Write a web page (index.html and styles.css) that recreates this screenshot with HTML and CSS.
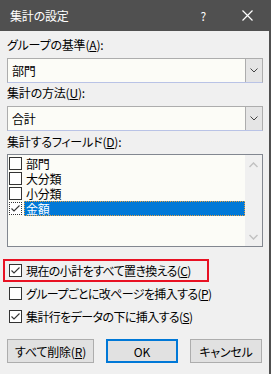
FILE: index.html
```html
<!DOCTYPE html>
<html lang="ja">
<head>
<meta charset="UTF-8" />
<title>集計の設定</title>
<link rel="stylesheet" href="styles.css">
</head>
<body>

<div class="dialog">
  <div class="titlebar">
    <span class="title">集計の設定</span>
    <span class="help">?</span>
    <svg class="close" width="11" height="11" viewBox="0 0 11 11"><path d="M0.5 0.5L10.5 10.5M10.5 0.5L0.5 10.5" stroke="#fff" stroke-width="1.2" fill="none"/></svg>
  </div>

  <div class="content">
    <div class="label label-first">グループの基準(<u>A</u>):</div>
    <div class="combo">
      <span class="combo-value">部門</span>
      <span class="combo-btn"><svg width="8" height="5" viewBox="0 0 8 5"><polyline points="0.5,0.5 4,4 7.5,0.5" stroke="#444" fill="none"/></svg></span>
    </div>

    <div class="label">集計の方法(<u>U</u>):</div>
    <div class="combo">
      <span class="combo-value">合計</span>
      <span class="combo-btn"><svg width="8" height="5" viewBox="0 0 8 5"><polyline points="0.5,0.5 4,4 7.5,0.5" stroke="#444" fill="none"/></svg></span>
    </div>

    <div class="label label-list">集計するフィールド(<u>D</u>):</div>
    <div class="listbox">
      <div class="items">
        <div class="item"><span class="box"></span><span class="item-text">部門</span></div>
        <div class="item"><span class="box"></span><span class="item-text">大分類</span></div>
        <div class="item"><span class="box"></span><span class="item-text">小分類</span></div>
        <div class="item selected"><span class="box checked dotted"><svg width="11" height="11" viewBox="0 0 11 11"><polyline points="1.5,5.5 4,8 9.5,2.5" stroke="#333" stroke-width="1.1" fill="none"/></svg></span><span class="item-text">金額</span></div>
      </div>
      <div class="scrollbar">
        <svg width="9" height="6" viewBox="0 0 9 6"><polyline points="0.5,5 4.5,1 8.5,5" stroke="#c2c2c2" stroke-width="1.5" fill="none"/></svg>
        <svg width="9" height="6" viewBox="0 0 9 6"><polyline points="0.5,1 4.5,5 8.5,1" stroke="#c2c2c2" stroke-width="1.5" fill="none"/></svg>
      </div>
    </div>

    <div class="options">
      <div class="option marked">
        <span class="box"><svg width="11" height="11" viewBox="0 0 11 11"><polyline points="1.5,5.5 4,8 9.5,2.5" stroke="#333" stroke-width="1.1" fill="none"/></svg></span>
        <span>現在の小計をすべて置き換える(<u>C</u>)</span>
      </div>
      <div class="option">
        <span class="box"></span>
        <span>グループごとに改ページを挿入する(<u>P</u>)</span>
      </div>
      <div class="option">
        <span class="box"><svg width="11" height="11" viewBox="0 0 11 11"><polyline points="1.5,5.5 4,8 9.5,2.5" stroke="#333" stroke-width="1.1" fill="none"/></svg></span>
        <span>集計行をデータの下に挿入する(<u>S</u>)</span>
      </div>
    </div>

    <div class="buttons">
      <button class="btn btn-wide">すべて削除(<u>R</u>)</button>
      <button class="btn btn-default">OK</button>
      <button class="btn">キャンセル</button>
    </div>
  </div>
</div>

</body>
</html>
```

FILE: styles.css
```css
body {
  margin: 0;
  background: #f0f0f0;
  font-family: "Noto Sans CJK JP", "Noto Sans", sans-serif;
  font-size: 12px;
  font-feature-settings: "palt";
  letter-spacing: -0.2px;
  color: #000;
}
u {
  text-underline-offset: 1px;
}
.dialog {
  width: 269px;
  height: 374px;
  background: #f0f0f0;
  border-right: 2px solid #505050;
}
.titlebar {
  height: 31px;
  background: #505050;
  color: #fff;
  display: flex;
  align-items: center;
  padding-left: 10px;
}
.title {
  flex: 1;
}
.help {
  margin-right: 36px;
}
.close {
  margin-right: 16px;
}
.content {
  padding: 6px 0 0 7px;
  width: 256px;
}
.label {
  height: 16px;
  line-height: 16px;
  margin-top: 2px;
}
.label-first {
  margin-top: 0;
}
.label-list {
  margin-top: 3px;
}
.combo {
  margin-top: 5px;
  height: 25px;
  box-sizing: border-box;
  border: 1px solid #adadad;
  border-bottom-color: #b9c3e6;
  background: #fcfcf7;
  display: flex;
}
.combo-value {
  flex: 1;
  line-height: 23px;
  padding-left: 4px;
}
.combo-btn {
  width: 16px;
  background: #e5e5e5;
  border-left: 1px solid #adadad;
  display: flex;
  align-items: center;
  justify-content: center;
}
.listbox {
  margin-top: 4px;
  height: 93px;
  box-sizing: border-box;
  border: 1px solid #828790;
  background: #fcfcf7;
  display: flex;
}
.items {
  flex: 1;
  padding: 1px 0 0 1px;
}
.item {
  height: 15px;
  display: flex;
  align-items: center;
}
.item-text {
  margin-left: 2px;
  padding-left: 2px;
  line-height: 15px;
  flex: 1;
}
.item.selected .item-text {
  background: #0078d7;
  color: #fff;
  outline: 1px dotted #e6a040;
  outline-offset: -1px;
}
.box {
  width: 13px;
  height: 13px;
  box-sizing: border-box;
  border: 1px solid #333;
  background: #fff;
  display: flex;
  align-items: center;
  justify-content: center;
  flex: none;
}
.box.dotted {
  border-style: dotted;
}
.scrollbar {
  width: 17px;
  background: #f0f0f0;
  display: flex;
  flex-direction: column;
  justify-content: space-between;
  align-items: center;
  padding: 7px 0 6px;
}
.options {
  margin-top: 12px;
  letter-spacing: -0.6px;
}
.option {
  height: 23px;
  display: flex;
  align-items: center;
  gap: 4px;
  padding-left: 2px;
}
.option.marked {
  box-sizing: border-box;
  width: 206px;
  height: 23px;
  margin-left: -4px;
  padding-left: 4px;
  border: 2px solid #e81123;
}
.buttons {
  margin-top: 11px;
  display: flex;
  gap: 12px;
}
.btn {
  height: 24px;
  width: 72px;
  box-sizing: border-box;
  background: #e1e1e1;
  border: 1px solid #adadad;
  font-family: inherit;
  font-size: 12px;
  font-feature-settings: "palt";
  letter-spacing: -0.2px;
  padding: 0;
  color: #000;
}
.btn-wide {
  width: 87px;
}
.btn-default {
  border: 2px solid #0078d7;
}
```
